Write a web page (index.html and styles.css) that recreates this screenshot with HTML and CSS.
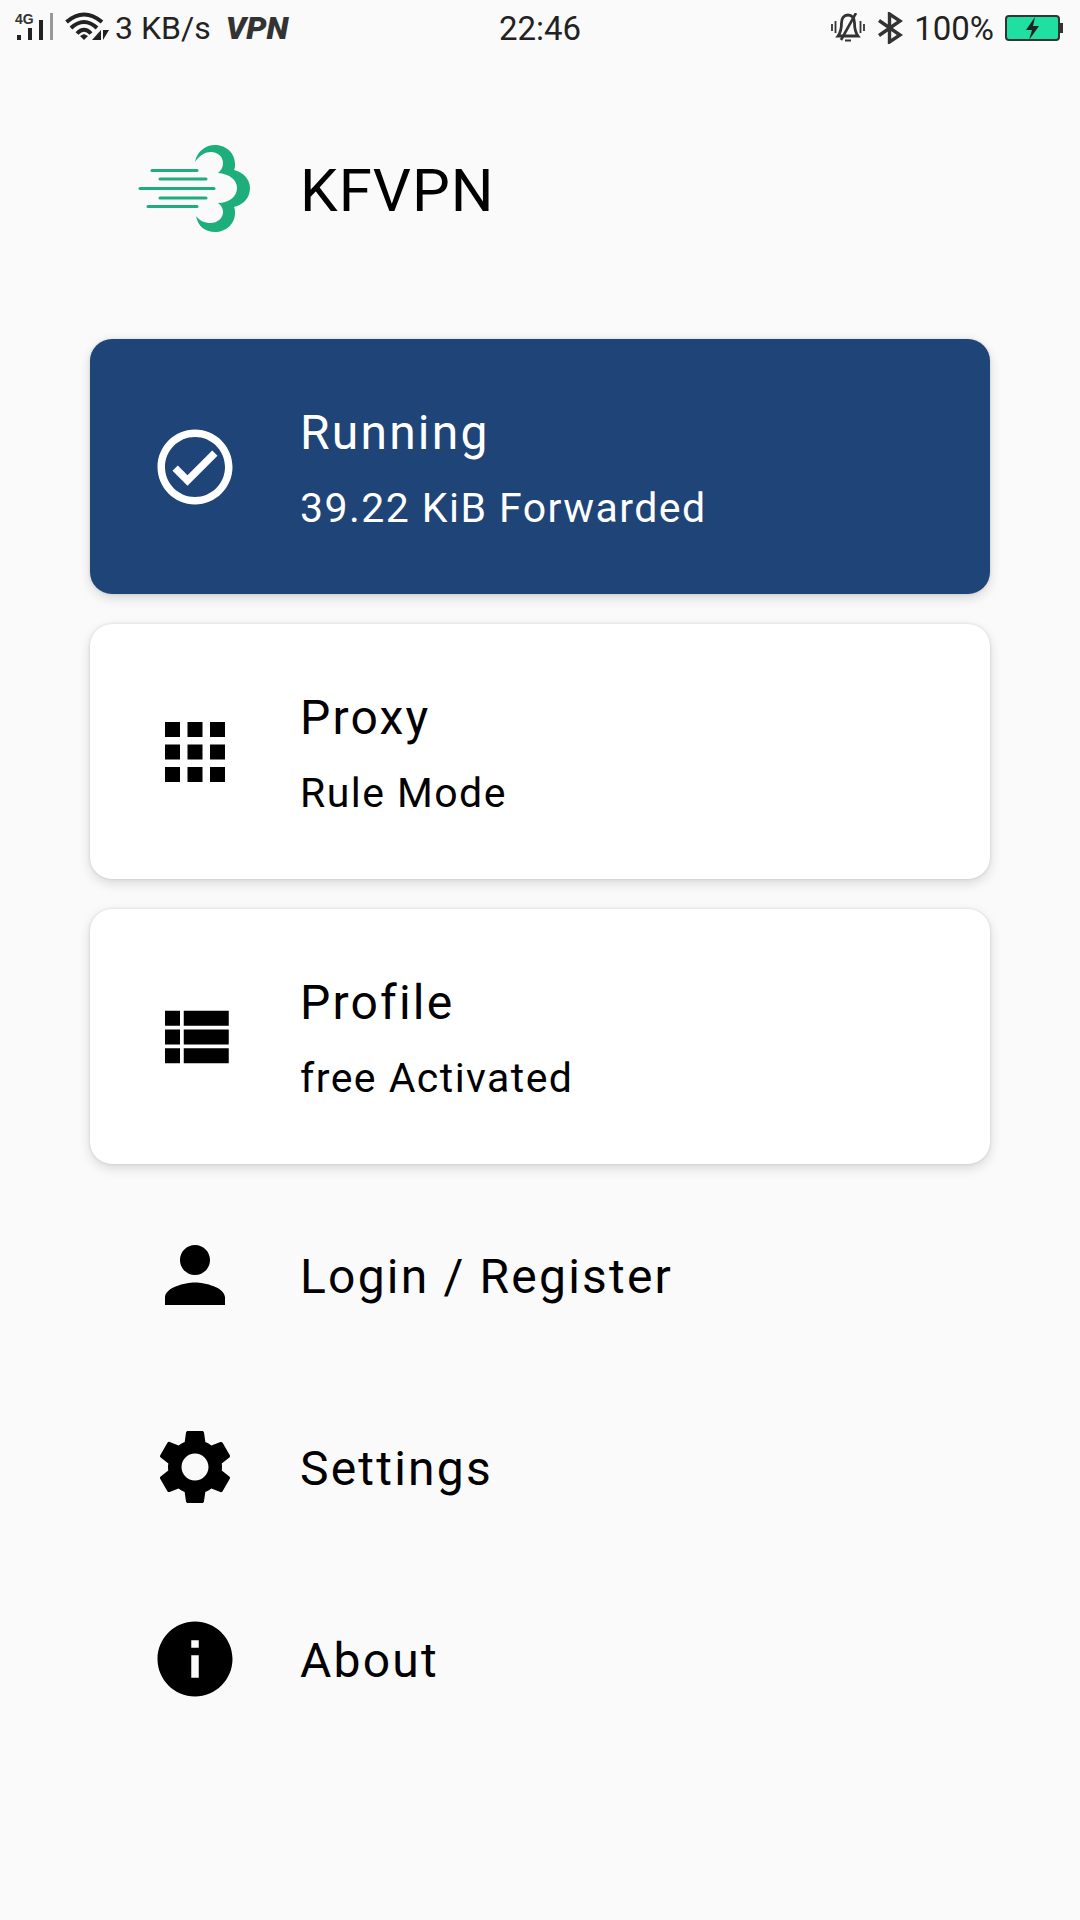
FILE: index.html
```html
<!DOCTYPE html>
<html lang="en">
<head>
    <meta charset="UTF-8">
    <meta name="viewport" content="width=device-width, initial-scale=1.0">
    <title>KFVPN</title>
    <link rel="stylesheet" href="styles.css">
</head>
<body>

    <div class="status-bar">
        <div class="status-left">
            <svg class="signal" width="56" height="40" viewBox="0 0 56 40">
                <text x="15" y="15.5" class="signal-label">4G</text>
                <rect x="17" y="27" width="4" height="5" fill="#222"/>
                <rect x="28" y="20" width="4" height="12" fill="#222"/>
                <rect x="39" y="12" width="4" height="20" fill="#222"/>
                <rect x="50" y="5" width="3" height="27" fill="#999"/>
            </svg>
            <svg class="wifi" width="44" height="40" viewBox="0 0 44 40">
                <path d="M1.5 14 Q19 -1 37 14" fill="none" stroke="#222" stroke-width="4"/>
                <path d="M6 20 Q19 8 32 20" fill="none" stroke="#222" stroke-width="4"/>
                <path d="M12 25.5 Q19 18 26 25.5" fill="none" stroke="#222" stroke-width="4"/>
                <path d="M15 28 L19 26 L23 28 L19 32 Z" fill="#222"/>
                <path d="M36 22 V32 H27 Z M38 22 H44 L38 32 Z" fill="#222"/>
            </svg>
            <span class="net-speed">3 KB/s</span>
            <span class="vpn-tag">VPN</span>
        </div>
        <div class="status-time">22:46</div>
        <div class="status-right">
            <svg class="bell" width="34" height="30" viewBox="0 0 34 30">
                <path d="M7 23 C10 19 10.5 14 10.5 10 C10.5 5 13 2 17 2 C21 2 23.5 5 23.5 10 C23.5 14 24 19 27 23 Z" fill="none" stroke="#333" stroke-width="2.8"/>
                <path d="M10 27 L25 0" stroke="#333" stroke-width="2.6"/>
                <path d="M14 27.5 H20" stroke="#333" stroke-width="2"/>
                <path d="M1 11 V18 M4.5 8 V20 M29.5 8 V20 M33 11 V18" stroke="#333" stroke-width="1.8"/>
            </svg>
            <svg class="bluetooth" width="26" height="32" viewBox="0 0 26 32">
                <path d="M2 8.5 L23 23 L12.5 30 V2 L23 9 L2 23.5" fill="none" stroke="#333" stroke-width="3.4"/>
            </svg>
            <span class="battery-level">100%</span>
            <svg class="battery" width="60" height="26" viewBox="0 0 60 26">
                <rect x="1" y="1" width="53" height="24" rx="3" fill="#1fe0a0" stroke="#333" stroke-width="2"/>
                <rect x="55" y="8" width="3" height="10" fill="#333"/>
                <path d="M30 2 L21 15 H27 L24 25 L34 11 H28 Z" fill="#222"/>
            </svg>
        </div>
    </div>

    <div class="app-header">
        <svg class="app-logo" width="120" height="100" viewBox="0 0 120 100">
            <g stroke="#1dae7c" stroke-width="3" stroke-linecap="round">
                <path d="M17 30.5 H62"/>
                <path d="M25 39 H71"/>
                <path d="M5 48.5 H79"/>
                <path d="M25 58 H71"/>
                <path d="M13 66.5 H62"/>
            </g>
            <path fill="#1dae7c" d="M60 22 C62 11 71 5 80 5 C92 5 100 14 100 24 C100 26 100 28 99 30 C108 32 115 39 115 48 C115 58 108 65 99 67 C100 69 100 71 100 73 C100 84 91 92 80 92 C71 92 63 87 61 76 C65 81 70 83 75 83 C83 83 88 78 88 72 C88 69 87 66 83 63 C95 63 102 56 102 48 C102 40 95 34 83 33 C87 30 88 26 88 23 C88 16 82 12 76 12 C70 12 65 15 60 22 Z"/>
        </svg>
        <h1>KFVPN</h1>
    </div>

    <div class="menu">
        <div class="card card-active">
            <svg class="menu-icon" viewBox="0 0 24 24"><path d="M12 2C6.48 2 2 6.48 2 12s4.48 10 10 10 10-4.48 10-10S17.52 2 12 2zm0 18c-4.41 0-8-3.59-8-8s3.59-8 8-8 8 3.59 8 8-3.59 8-8 8zm4.59-12.42L10 14.17l-2.59-2.58L6 13l4 4 8-8z"/></svg>
            <div class="card-text">
                <h2>Running</h2>
                <p>39.22 KiB Forwarded</p>
            </div>
        </div>
        <div class="card">
            <svg class="menu-icon" viewBox="0 0 24 24"><path d="M4 8h4V4H4v4zm6 12h4v-4h-4v4zm-6 0h4v-4H4v4zm0-6h4v-4H4v4zm6 0h4v-4h-4v4zm6-10v4h4V4h-4zm-6 4h4V4h-4v4zm6 6h4v-4h-4v4zm0 6h4v-4h-4v4z"/></svg>
            <div class="card-text">
                <h2>Proxy</h2>
                <p>Rule Mode</p>
            </div>
        </div>
        <div class="card">
            <svg class="menu-icon" viewBox="0 0 24 24"><path d="M4 14h4v-4H4v4zm0 5h4v-4H4v4zM4 9h4V5H4v4zm5 5h12v-4H9v4zm0 5h12v-4H9v4zM9 5v4h12V5H9z"/></svg>
            <div class="card-text">
                <h2>Profile</h2>
                <p>free Activated</p>
            </div>
        </div>

        <div class="menu-list">
            <div class="menu-row">
                <svg class="menu-icon" viewBox="0 0 24 24"><path d="M12 12c2.21 0 4-1.79 4-4s-1.79-4-4-4-4 1.79-4 4 1.79 4 4 4zm0 2c-2.67 0-8 1.34-8 4v2h16v-2c0-2.66-5.33-4-8-4z"/></svg>
                <span>Login / Register</span>
            </div>
            <div class="menu-row">
                <svg class="menu-icon" viewBox="0 0 24 24"><path d="M19.14 12.94c.04-.3.06-.61.06-.94 0-.32-.02-.64-.07-.94l2.03-1.58c.18-.14.23-.41.12-.61l-1.92-3.32c-.12-.22-.37-.29-.59-.22l-2.39.96c-.5-.38-1.03-.7-1.62-.94l-.36-2.54c-.04-.24-.24-.41-.48-.41h-3.84c-.24 0-.43.17-.47.41l-.36 2.54c-.59.24-1.13.57-1.62.94l-2.39-.96c-.22-.08-.47 0-.59.22L2.74 8.87c-.12.21-.08.47.12.61l2.03 1.58c-.05.3-.09.63-.09.94s.02.64.07.94l-2.03 1.58c-.18.14-.23.41-.12.61l1.92 3.32c.12.22.37.29.59.22l2.39-.96c.5.38 1.03.7 1.62.94l.36 2.54c.05.24.24.41.48.41h3.84c.24 0 .44-.17.47-.41l.36-2.54c.59-.24 1.13-.56 1.62-.94l2.39.96c.22.08.47 0 .59-.22l1.92-3.32c.12-.22.07-.47-.12-.61l-2.01-1.58zM12 15.6c-1.98 0-3.6-1.62-3.6-3.6s1.62-3.6 3.6-3.6 3.6 1.62 3.6 3.6-1.62 3.6-3.6 3.6z"/></svg>
                <span>Settings</span>
            </div>
            <div class="menu-row">
                <svg class="menu-icon" viewBox="0 0 24 24"><path d="M12 2C6.48 2 2 6.48 2 12s4.48 10 10 10 10-4.48 10-10S17.52 2 12 2zm1 15h-2v-6h2v6zm0-8h-2V7h2v2z"/></svg>
                <span>About</span>
            </div>
        </div>
    </div>

</body>
</html>
```

FILE: styles.css
```css
* {
    box-sizing: border-box;
    margin: 0;
    padding: 0;
}

body {
    width: 1080px;
    height: 1920px;
    overflow: hidden;
    background: #fafafa;
    font-family: 'Roboto', sans-serif;
    color: #000;
}

/* status bar */
.status-bar {
    height: 56px;
    display: grid;
    grid-template-columns: 1fr auto 1fr;
    align-items: center;
    color: #222;
    font-size: 33px;
}

.status-left {
    display: flex;
    align-items: center;
}

.signal-label {
    font: bold 14px 'Liberation Sans', sans-serif;
    fill: #333;
}

.wifi {
    margin-left: 9px;
}

.net-speed {
    margin-left: 6px;
    font-size: 32px;
}

.vpn-tag {
    margin-left: 15px;
    font-size: 32px;
    font-weight: 900;
    font-style: italic;
    color: #333;
}

.status-right {
    display: flex;
    align-items: center;
    justify-content: flex-end;
    padding-right: 15px;
}

.bell {
    margin-right: 12px;
}

.bluetooth {
    margin-right: 11px;
}

.battery {
    margin-left: 11px;
}

/* logo row */
.app-header {
    height: 268px;
    display: flex;
    align-items: center;
    padding-left: 135px;
}

.app-logo {
    margin-right: 45px;
}

.app-header h1 {
    font-size: 60px;
    font-weight: 400;
    letter-spacing: 1px;
}

/* cards and rows */
.menu {
    padding: 0 90px;
}

.menu-icon {
    width: 90px;
    height: 90px;
    flex-shrink: 0;
    fill: currentColor;
}

.card {
    height: 255px;
    margin: 15px 0 30px;
    display: flex;
    align-items: center;
    gap: 60px;
    padding-left: 60px;
    background: #fff;
    border-radius: 22px;
    box-shadow: 0 4px 12px rgba(0, 0, 0, 0.14), 0 0 3px rgba(0, 0, 0, 0.12);
}

.card + .card {
    margin-top: 0;
}

.card-active {
    background: #1f4477;
    color: #fff;
}

.card-text {
    padding-top: 8px;
}

.card-text h2 {
    font-size: 48px;
    font-weight: 400;
    line-height: 60px;
    letter-spacing: 2.2px;
}

.card-text p {
    margin-top: 15px;
    font-size: 41px;
    line-height: 60px;
    letter-spacing: 1.45px;
}

.menu-list {
    margin-top: -15px;
}

.menu-row {
    height: 192px;
    display: flex;
    align-items: center;
    gap: 60px;
    padding-left: 60px;
    font-size: 48px;
    letter-spacing: 2.2px;
}

.menu-row span {
    padding-top: 2px;
}
```
